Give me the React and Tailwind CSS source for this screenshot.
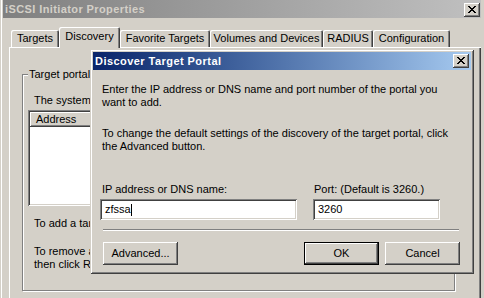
import React from "react";

const RAISED =
  "shadow-[inset_-1px_-1px_#404040,inset_1px_1px_#ffffff,inset_-2px_-2px_#808080,inset_2px_2px_#d4d0c8]";
const SUNKEN =
  "shadow-[inset_1px_1px_#808080,inset_-1px_-1px_#ffffff,inset_2px_2px_#404040,inset_-2px_-2px_#d4d0c8]";

function CloseGlyph() {
  return (
    <svg width="8" height="7" viewBox="0 0 8 7" shapeRendering="crispEdges" className="block">
      <path
        fill="#000"
        d="M0 0h2v1H0z M6 0h2v1H6z M1 1h2v1H1z M5 1h2v1H5z M2 2h4v1H2z M3 3h2v1H3z M2 4h4v1H2z M1 5h2v1H1z M5 5h2v1H5z M0 6h2v1H0z M6 6h2v1H6z"
      />
    </svg>
  );
}

function CloseButton({ className }) {
  return (
    <div className={"w-[16px] h-[14px] bg-[#d4d0c8] pl-[4px] pt-[3px] " + RAISED + " " + className}>
      <CloseGlyph />
    </div>
  );
}

function Tab({ label, widthClass }) {
  return (
    <div
      className={
        "h-[17px] pt-[2px] text-center rounded-t-[2px] shadow-[inset_1px_1px_#ffffff,inset_-1px_0_#404040,inset_-2px_0_#808080] " +
        widthClass
      }
    >
      {label}
    </div>
  );
}

function SelectedTab({ label, widthClass }) {
  return (
    <div
      className={
        "relative z-10 -mb-px h-[21px] pt-[3px] text-center bg-[#d4d0c8] rounded-t-[2px] shadow-[inset_1px_1px_#ffffff,inset_-1px_0_#404040,inset_-2px_0_#808080] " +
        widthClass
      }
    >
      {label}
    </div>
  );
}

function Button({ children, isDefault }) {
  return (
    <div
      className={
        "w-[75px] h-[23px] flex items-center justify-center bg-[#d4d0c8] " +
        RAISED +
        (isDefault ? " border border-black" : "")
      }
    >
      {children}
    </div>
  );
}

export default function App() {
  return (
    <div className="relative w-[484px] h-[298px] overflow-hidden bg-[#d4d0c8] text-[11px] leading-[13px] text-black [font-family:'Liberation_Sans',Arial,sans-serif]">
      {/* Background window: iSCSI Initiator Properties */}
      <div className="flex flex-col h-full pl-[3px] pr-[3px] shadow-[inset_1px_0_#d4d0c8,inset_2px_0_#ffffff]">
        <div className="h-[18px] flex items-start bg-gradient-to-r from-[#808080] to-[#c0c0c0]">
          <span className="flex-1 pl-[2px] pt-[1px] leading-[16px] font-bold tracking-[0.4px] text-[#d4d0c8]">
            iSCSI Initiator Properties
          </span>
          <CloseButton className="mt-[3px] mr-[1px]" />
        </div>

        {/* Tabs */}
        <div className="mt-[9px] ml-[8px] flex items-end h-[20px]">
          <Tab label="Targets" widthClass="w-[48px]" />
          <SelectedTab label="Discovery" widthClass="w-[61px]" />
          <Tab label="Favorite Targets" widthClass="w-[90px]" />
          <Tab label="Volumes and Devices" widthClass="w-[113px]" />
          <Tab label="RADIUS" widthClass="w-[50px]" />
          <Tab label="Configuration" widthClass="w-[77px]" />
        </div>

        {/* Tab panel */}
        <div className="flex-1 ml-[6px] shadow-[inset_1px_1px_#ffffff,inset_-1px_0_#404040,inset_-2px_0_#808080] pt-[27px] pl-[13px]">
          <div className="relative w-[433px] h-[217px] border border-[#808080] shadow-[inset_1px_1px_#ffffff,1px_1px_#ffffff] flex flex-col pl-[5px] pt-[19px]">
            <span className="absolute left-[5px] top-[-7px] px-[1px] bg-[#d4d0c8]">Target portals</span>
            <p className="pl-[6px]">The system will actively look for targets on following portals:</p>
            <div className={"mt-[3px] w-[420px] h-[96px] bg-white p-[2px] " + SUNKEN}>
              <div className={"w-[150px] h-[15px] pl-[6px] pt-[1px] bg-[#d4d0c8] " + RAISED}>Address</div>
            </div>
            <p className="pl-[6px] mt-[11px]">To add a target portal, click Add Portal.</p>
            <p className="pl-[6px] mt-[15px]">
              To remove a target portal, select the address above and
              <br />
              then click Remove.
            </p>
          </div>
        </div>
      </div>

      {/* Dialog: Discover Target Portal */}
      <div className="absolute left-[90px] top-[49px] w-[384px] h-[225px] p-[3px] bg-[#d4d0c8] flex flex-col shadow-[inset_1px_1px_#d4d0c8,inset_-1px_-1px_#404040,inset_2px_2px_#ffffff,inset_-2px_-2px_#808080]">
        <div className="h-[18px] flex items-center bg-gradient-to-r from-[#0a246a] to-[#a6caf0]">
          <span className="flex-1 pl-[2px] leading-[18px] font-bold tracking-[0.45px] text-white">Discover Target Portal</span>
          <CloseButton className="mr-[2px]" />
        </div>

        <div className="flex flex-col pl-[7px] pt-[13px]">
          <p className="pl-[2px]">
            Enter the IP address or DNS name and port number of the portal you
            <br />
            want to add.
          </p>
          <p className="pl-[2px] mt-[18px]">
            To change the default settings of the discovery of the target portal, click
            <br />
            the Advanced button.
          </p>

          <div className="mt-[30px] flex">
            <div className="w-[197px] flex flex-col">
              <span className="pl-[2px]">IP address or DNS name:</span>
              <div className={"mt-[3px] h-[21px] bg-white flex items-center pl-[5px] " + SUNKEN}>
                <span>zfssa</span>
                <span className="w-px h-[12px] bg-black" />
              </div>
            </div>
            <div className="ml-[16px] w-[127px] flex flex-col">
              <span className="pl-[1px]">Port: (Default is 3260.)</span>
              <div className={"mt-[3px] h-[21px] bg-white flex items-center pl-[5px] " + SUNKEN}>
                <span>3260</span>
              </div>
            </div>
          </div>

          <div className="mt-[9px] ml-[3px] w-[356px] h-[2px] border-t border-t-[#808080] border-b border-b-white" />

          <div className="mt-[11px] ml-[3px] flex w-[357px]">
            <Button>Advanced...</Button>
            <div className="flex-1" />
            <Button isDefault>OK</Button>
            <div className="w-[6px]" />
            <Button>Cancel</Button>
          </div>
        </div>
      </div>
    </div>
  );
}
